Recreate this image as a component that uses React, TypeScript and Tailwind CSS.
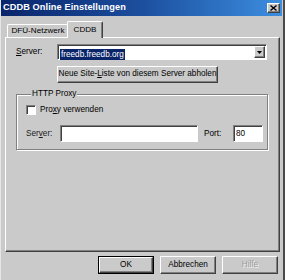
import React from "react";

const raised =
  "border border-t-white border-l-white border-r-[#404040] border-b-[#404040] shadow-[inset_-1px_-1px_0_#808080]";
const sunken =
  "border border-t-[#808080] border-l-[#808080] border-r-white border-b-white shadow-[inset_1px_1px_0_#404040]";

const Tab = ({ label, active }: { label: string; active?: boolean }) => (
  <div
    className={
      active
        ? "relative -ml-[2px] h-[17px] w-[36px] -mb-[1px] z-10 flex items-center justify-center bg-[#cacaca] border-t border-l border-t-white border-l-white border-r border-r-[#404040] shadow-[inset_-1px_0_0_#808080] rounded-t-[2px]"
        : "h-[13px] w-[62px] flex items-center justify-center bg-[#cacaca] border-t border-l border-t-white border-l-white border-r border-r-[#808080] rounded-tl-[2px]"
    }
  >
    <span className="text-[8.1px] leading-none">{label}</span>
  </div>
);

const Btn = ({
  children,
  def,
  disabled,
  className = "",
}: {
  children: React.ReactNode;
  def?: boolean;
  disabled?: boolean;
  className?: string;
}) => (
  <div
    className={`flex items-center justify-center bg-[#cacaca] ${
      def ? "border border-black" : ""
    } ${className}`}
  >
    <div className={`w-full h-full flex items-center justify-center ${raised}`}>
      <span
        className={`text-[8.2px] leading-none ${
          disabled ? "text-[#9c9c9c] [text-shadow:1px_1px_0_#f4f4f4]" : "text-black"
        }`}
      >
        {children}
      </span>
    </div>
  </div>
);

export default function App() {
  return (
    <div
      className="w-[285px] h-[280px] bg-[#cacaca] flex flex-col border-l border-l-[#e6e6e6] border-r-2 border-r-[#4a4a4a] text-black overflow-hidden"
      style={{ fontFamily: '"Liberation Sans", Arial, sans-serif' }}
    >
      {/* title bar */}
      <div className="h-[16px] w-[282px] -ml-[1px] flex items-center justify-between pl-[3px] pr-[2px] bg-gradient-to-r from-[#0a246a] via-[#1c4f9e] to-[#3d8ee0]">
        <span className="text-white font-bold text-[9.2px] leading-none tracking-[0.1px]">
          CDDB Online Einstellungen
        </span>
        <div className={`w-[13px] h-[10px] bg-[#cacaca] flex items-center justify-center ${raised}`}>
          <svg width="7" height="6" viewBox="0 0 7 6">
            <path d="M0.5 0.5 L6.5 5.5 M6.5 0.5 L0.5 5.5" stroke="black" strokeWidth="1.4" />
          </svg>
        </div>
      </div>

      {/* tabs */}
      <div className="mt-[5px] ml-[6px] h-[16px] flex items-end">
        <Tab label="DFÜ-Netzwerk" />
        <Tab label="CDDB" active />
      </div>

      {/* panel */}
      <div className="ml-[4px] w-[275px] h-[215px] border border-t-white border-l-white border-r-[#404040] border-b-[#404040] shadow-[inset_-1px_-1px_0_#808080] pl-[10px] pt-[6px]">
        <div className="flex items-center h-[16px]">
          <span className="w-[41px] text-[8.2px] leading-none">
            <span className="underline">S</span>erver:
          </span>
          <div className={`w-[210px] h-[16px] bg-white flex items-center pl-[2px] pr-[1px] ${sunken}`}>
            <span className="flex-1">
              <span className="bg-[#0a246a] text-white text-[8.2px] leading-none px-[1px] py-[1px]">
                freedb.freedb.org
              </span>
            </span>
            <div className={`w-[11px] h-[12px] bg-[#cacaca] flex items-center justify-center ${raised}`}>
              <svg width="5" height="3" viewBox="0 0 5 3">
                <path d="M0 0 H5 L2.5 3 Z" fill="black" />
              </svg>
            </div>
          </div>
        </div>

        <Btn className="ml-[41px] mt-[6px] w-[161px] h-[17px]">
          Neue Site-<span className="underline">L</span>iste von diesem Server abholen
        </Btn>

        <fieldset className="mt-[7px] w-[252px] h-[60px] border border-[#808080] shadow-[inset_1px_1px_0_#ffffff,1px_1px_0_#ffffff] pl-[9px] pr-[4px]">
          <legend className="ml-[5px] px-[1px] bg-[#cacaca] text-[8.2px] leading-none">HTTP Proxy</legend>
          <div className="mt-[7px] flex items-center gap-[4px]">
            <div className={`w-[10px] h-[10px] bg-white ${sunken}`} />
            <span className="text-[8.2px] leading-none">
              Pro<span className="underline">x</span>y verwenden
            </span>
          </div>
          <div className="mt-[10px] flex items-center">
            <span className="w-[34px] text-[8.2px] leading-none text-[#1a1a1a]">
              Ser<span className="underline">v</span>er:
            </span>
            <div className={`w-[138px] h-[17px] bg-white ${sunken}`} />
            <span className="ml-[6px] w-[29px] text-[8.2px] leading-none">Port:</span>
            <div className={`w-[30px] h-[17px] bg-white flex items-center pl-[2px] ${sunken}`}>
              <span className="text-[8.2px] leading-none">80</span>
            </div>
          </div>
        </fieldset>
      </div>

      {/* dialog buttons */}
      <div className="mt-[4px] flex justify-end gap-[6px] pr-[5px]">
        <Btn def className="w-[56px] h-[18px]">OK</Btn>
        <Btn className="w-[56px] h-[18px]">Abbrechen</Btn>
        <Btn disabled className="w-[56px] h-[18px]">Hilfe</Btn>
      </div>
    </div>
  );
}
